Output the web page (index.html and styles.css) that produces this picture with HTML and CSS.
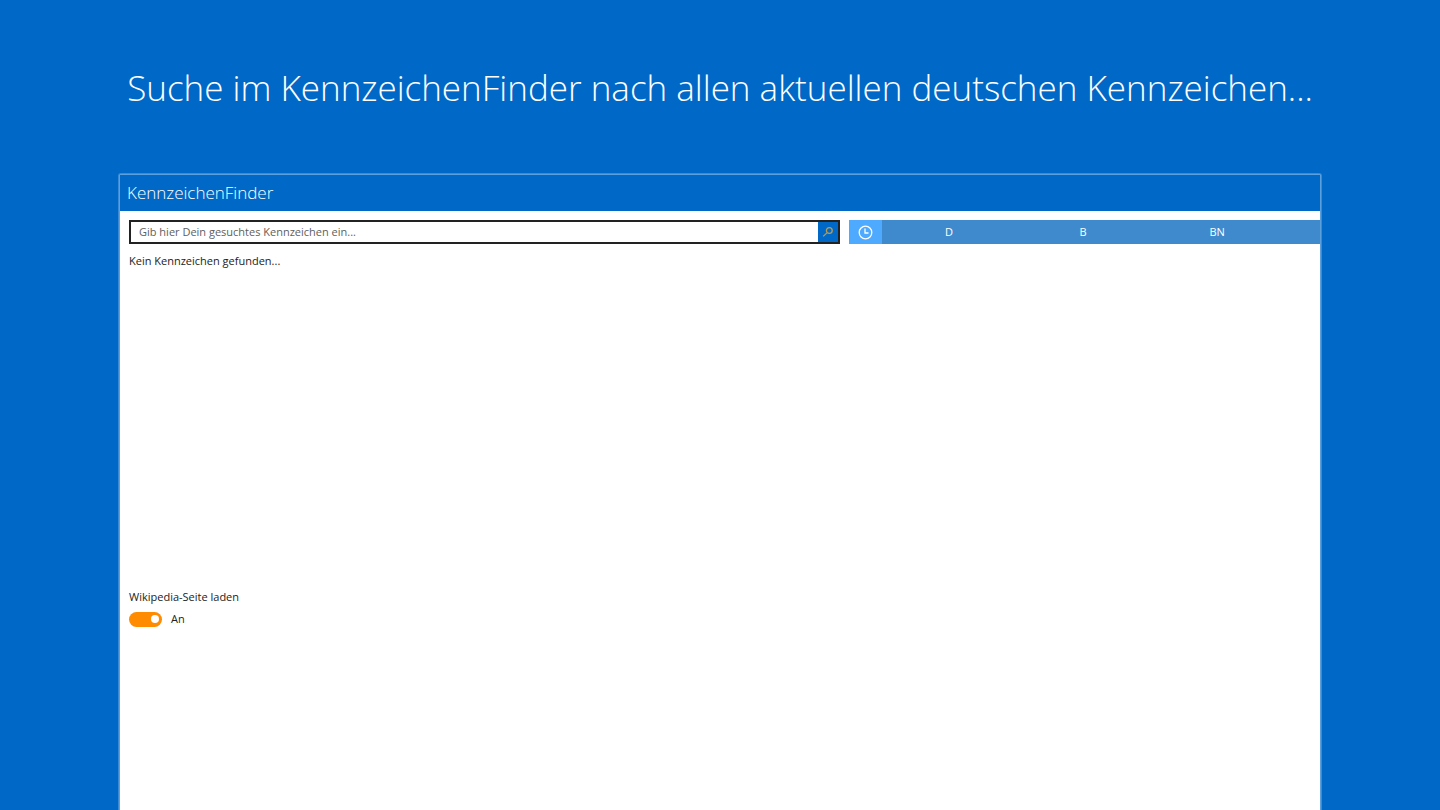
FILE: index.html
```html
<!DOCTYPE html>
<html lang="de">
<head>
    <meta charset="UTF-8">
    <meta name="viewport" content="width=device-width, initial-scale=1.0">
    <title>KennzeichenFinder</title>
    <link rel="stylesheet" href="styles.css">
</head>
<body>
    <h1 class="headline">Suche im KennzeichenFinder nach allen aktuellen deutschen Kennzeichen...</h1>

    <main class="window">
        <header class="window-header">
            <h2>KennzeichenFinder</h2>
        </header>

        <div class="toolbar">
            <form class="search">
                <input type="text" class="search-input" aria-label="Kennzeichen" placeholder="Gib hier Dein gesuchtes Kennzeichen ein...">
                <button type="button" class="search-btn" aria-label="Suchen">
                    <svg width="12" height="12" viewBox="0 0 12 12" fill="none" stroke="currentColor" stroke-width="1.3">
                        <circle cx="7.3" cy="4.5" r="2.9" />
                        <path d="M5.2 6.6 L1.2 10.4" />
                    </svg>
                </button>
            </form>

            <nav class="recent">
                <button type="button" class="recent-icon" aria-label="Verlauf">
                    <svg width="15" height="15" viewBox="0 0 15 15" fill="none" stroke="currentColor" stroke-width="1.3">
                        <circle cx="7.5" cy="7.5" r="6.3" />
                        <path d="M7 3.5 V8 H10.5" />
                    </svg>
                </button>
                <button type="button" class="recent-item">D</button>
                <button type="button" class="recent-item">B</button>
                <button type="button" class="recent-item">BN</button>
            </nav>
        </div>

        <p class="results">Kein Kennzeichen gefunden...</p>

        <div class="setting">
            <label for="wikiToggle">Wikipedia-Seite laden</label>
            <div class="toggle-row">
                <input type="checkbox" id="wikiToggle" class="toggle" checked>
                <span>An</span>
            </div>
        </div>
    </main>
</body>
</html>
```
FILE: styles.css
```css
* {
    box-sizing: border-box;
}
body {
    font-family: "Open Sans", "Noto Sans", sans-serif;
    font-size: 11px;
    line-height: 16px;
    margin: 0;
    min-height: 100vh;
    display: flex;
    flex-direction: column;
    background-color: #0069c7;
    color: #222;
}
h1, h2, p {
    margin: 0;
}
button, input {
    font: inherit;
    margin: 0;
    padding: 0;
    border: none;
    border-radius: 0;
}
.headline {
    padding: 63px 0 61px;
    font-size: 35px;
    font-weight: 350;
    line-height: 50px;
    text-align: center;
    white-space: nowrap;
    color: white;
}
.window {
    flex: 1;
    margin: 0 119px;
    background: white;
    border: 1px solid #5b9fdc;
    border-bottom: none;
    border-radius: 2px 2px 0 0;
    box-shadow: 0 0 0 1px #3b8ad3;
}
.window-header {
    padding: 6px 7px;
    background: #0069c7;
    color: white;
}
.window-header h2 {
    font-size: 17px;
    font-weight: 300;
    line-height: 24px;
}
.toolbar {
    display: grid;
    grid-template-columns: 1.51fr 1fr;
    gap: 9px;
    padding: 9px 0 9px 9px;
}
.search {
    display: flex;
    height: 24px;
    border: 2px solid #222;
}
.search-input {
    flex: 1;
    min-width: 0;
    padding-left: 8px;
    outline: none;
}
.search-input::placeholder {
    color: #606060;
    opacity: 1;
}
.search-btn {
    width: 20px;
    display: flex;
    align-items: center;
    justify-content: center;
    background: #0069c7;
    color: #b89c50;
}
.recent {
    display: flex;
    height: 24px;
    overflow: hidden;
    background: #3f8acd;
}
.recent-icon {
    flex: 0 0 33px;
    display: flex;
    align-items: center;
    justify-content: center;
    background: #4daaff;
    color: white;
}
.recent-item {
    flex: 0 0 134px;
    background: none;
    color: white;
}
.results {
    min-height: 336px;
    padding: 0 9px;
}
.setting {
    padding: 0 9px;
}
.toggle-row {
    display: flex;
    align-items: center;
    gap: 9px;
    margin-top: 6px;
}
.toggle {
    appearance: none;
    display: flex;
    align-items: center;
    justify-content: flex-end;
    width: 33px;
    height: 15px;
    padding: 0 3px;
    border-radius: 8px;
    background: #ff8c00;
}
.toggle::before {
    content: "";
    width: 8px;
    height: 8px;
    border-radius: 50%;
    background: white;
}
.toggle:not(:checked) {
    justify-content: flex-start;
    background: #999;
}
```
